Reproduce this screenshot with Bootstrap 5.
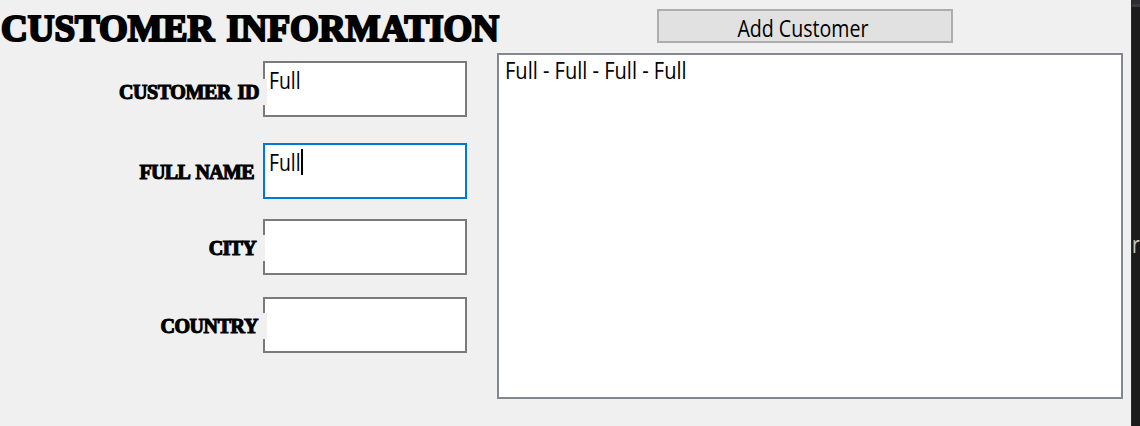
<!DOCTYPE html>
<html lang="en">
<head>
<meta charset="utf-8">
<meta name="viewport" content="width=device-width, initial-scale=1">
<title>Customer Information</title>
<link rel="stylesheet" href="https://cdn.jsdelivr.net/npm/bootstrap@5.3.0/dist/css/bootstrap.min.css">
<style>
body{height:426px;background:#f0f0f0;color:#000;font-family:"Open Sans",sans-serif;font-size:24.5px;line-height:34px}
.left-pane{width:497px}
.right-pane{width:634px;padding-top:9px}
.form-title{height:61px;padding:8px 0 0 1px;font:bold 37px/42px "Liberation Serif",serif;letter-spacing:0;word-spacing:3px;-webkit-text-stroke:2.2px #000;white-space:nowrap}
.field-row{height:56px}
.field-label{height:26px;font:bold 20px/26px "Liberation Serif",serif;letter-spacing:-.4px;word-spacing:2px;-webkit-text-stroke:1.1px #000;background:#f0f0f0;white-space:nowrap;z-index:1}
.label-id{width:267px;margin:18px -4px 0 0;padding-right:8px}
.label-name{width:263px;margin-top:16px;padding-right:9px;letter-spacing:-.65px}
.label-city{width:265px;margin:16px -2px 0 0;padding-right:9px;letter-spacing:-.7px}
.label-country{width:267px;margin:16px -4px 0 0;padding-right:9px}
.field-box{width:204px;height:56px;border:2px solid #7a7a7a;background:#fff;padding:0 0 0 4px}
.field-box.active{border-color:#0078d7}
.tight{display:inline-block;transform:scaleX(.79);transform-origin:0 50%;white-space:pre}
.caret{left:36px;top:4px;width:2px;height:26px;background:#000}
.add-btn{width:296px;height:34px;margin-left:160px;background:#e1e1e1;border:2px solid #adadad;font-size:24.5px;line-height:34px;color:#000}
.add-btn .tight{transform:translate(-2px,2px) scaleX(.8);transform-origin:50% 50%}
.records{width:626px;height:346px;margin-top:10px;border:2px solid #828790;background:#fff;padding:0 0 0 6px;line-height:30px}
.records .tight{transform:scaleX(.818)}
.editor{width:9px;background:#1b1b1c;border-left:1px solid #29292a;color:#c8c8c8}
.editor-top{height:7px;background:#2d2d30;border-bottom:3px solid #3b3b3f}
.editor-text{margin:220px 0 0 0;font-size:24px}
.editor-text .tight{transform:scaleX(.79)}
</style>
</head>
<body class="d-flex overflow-hidden m-0">
<main class="left-pane flex-shrink-0">
  <h1 class="form-title m-0">CUSTOMER INFORMATION</h1>
  <div class="field-row d-flex">
    <div class="field-label label-id position-relative text-end">CUSTOMER ID</div>
    <div class="field-box"><span class="tight">Full</span></div>
  </div>
  <div class="field-row d-flex" style="margin-top:26px">
    <div class="field-label label-name text-end">FULL NAME</div>
    <div class="field-box active position-relative"><span class="tight">Full</span><span class="caret position-absolute"></span></div>
  </div>
  <div class="field-row d-flex" style="margin-top:20px">
    <div class="field-label label-city position-relative text-end">CITY</div>
    <div class="field-box"></div>
  </div>
  <div class="field-row d-flex" style="margin-top:22px">
    <div class="field-label label-country position-relative text-end">COUNTRY</div>
    <div class="field-box"></div>
  </div>
</main>
<section class="right-pane flex-shrink-0">
  <button class="add-btn btn rounded-0 p-0 d-flex align-items-center justify-content-center"><span class="tight">Add Customer</span></button>
  <div class="records"><span class="tight">Full - Full - Full - Full</span></div>
</section>
<aside class="editor flex-shrink-0 overflow-hidden"><div class="editor-top"></div><div class="editor-text"><span class="tight">r</span></div></aside>
<script src="https://cdn.jsdelivr.net/npm/bootstrap@5.3.0/dist/js/bootstrap.bundle.min.js"></script>
</body>
</html>
